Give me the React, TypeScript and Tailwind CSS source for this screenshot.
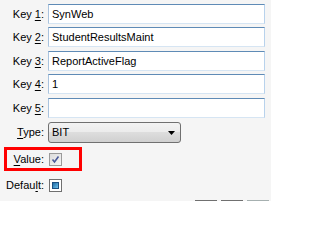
import React from "react";

const font = { fontFamily: '"Liberation Sans", Tahoma, Arial, sans-serif' };

function Label({ children }: { children: React.ReactNode }) {
  return (
    <div className="w-[45px] shrink-0 text-right pr-[1px] text-[11px] leading-none text-black whitespace-nowrap">
      {children}
    </div>
  );
}

function TextBox({ value }: { value: string }) {
  return (
    <div className="ml-[3px] w-[217px] h-[20px] bg-white border border-t-[#5f8bb6] border-l-[#a9c3de] border-r-[#b8d2ec] border-b-[#d6e5f3] flex items-center pl-[3px] text-[11px] text-black">
      {value}
    </div>
  );
}

function KeyRow({ n, value, mt }: { n: string; value: string; mt: string }) {
  return (
    <div className={`flex items-center h-[20px] ${mt}`}>
      <Label>
        Key <span className="underline underline-offset-[2px]">{n}</span>:
      </Label>
      <TextBox value={value} />
    </div>
  );
}

export default function App() {
  return (
    <div className="w-[271px] h-[201px] bg-[#f5f5f5] relative overflow-hidden" style={font}>
      <div className="flex flex-col pt-[4px]">
        <KeyRow n="1" value="SynWeb" mt="mt-0" />
        <KeyRow n="2" value="StudentResultsMaint" mt="mt-[3px]" />
        <KeyRow n="3" value="ReportActiveFlag" mt="mt-[4px]" />
        <KeyRow n="4" value="1" mt="mt-[3px]" />
        <KeyRow n="5" value="" mt="mt-[4px]" />
        <div className="flex items-center h-[21px] mt-[4px]">
          <Label>
            <span className="underline underline-offset-[2px]">T</span>ype:
          </Label>
          <div className="ml-[3px] w-[133px] h-[21px] rounded-[3px] border border-[#707070] bg-[linear-gradient(to_bottom,#f3f3f3_0%,#ececec_45%,#dddddd_50%,#d0d0d0_100%)] flex items-center justify-between pl-[3px] pr-[5px] text-[11px] text-black">
            <span>BIT</span>
            <svg width="7" height="4" viewBox="0 0 7 4">
              <polygon points="0,0 7,0 3.5,4" fill="#000" />
            </svg>
          </div>
        </div>
        <div className="mt-[4px] ml-[4px] w-[78px] h-[24px] border-[3px] border-[#ff0000] flex items-center">
          <div className="w-[38px] text-right pr-[1px] text-[11px] leading-none text-black">
            <span className="underline underline-offset-[2px]">V</span>alue:
          </div>
          <div className="ml-[4px] w-[13px] h-[13px] border border-[#9a9a9a] bg-[linear-gradient(to_bottom_right,#dcdcdc,#f4f4f4)] flex items-center justify-center">
            <svg width="9" height="9" viewBox="0 0 9 9">
              <path d="M1.5 4.5 L3.5 7 L7.5 1.5" stroke="#4a5a9a" strokeWidth="1.6" fill="none" />
            </svg>
          </div>
        </div>
        <div className="flex items-center h-[13px] mt-[8px]">
          <Label>
            Defau<span className="underline underline-offset-[2px]">l</span>t:
          </Label>
          <div className="ml-[4px] w-[13px] h-[13px] border border-[#707070] bg-white p-[2px]">
            <div className="w-full h-full border border-[#1c4f80] bg-[linear-gradient(to_bottom_right,#1f6ca6,#6ec0ea)]" />
          </div>
        </div>
      </div>
      <div className="absolute left-[195px] top-[200px] flex gap-[4px]">
        <div className="w-[22px] h-[1px] bg-[#707070]" />
        <div className="w-[22px] h-[1px] bg-[#707070]" />
        <div className="w-[22px] h-[1px] bg-[#a6b0b0]" />
      </div>
    </div>
  );
}
